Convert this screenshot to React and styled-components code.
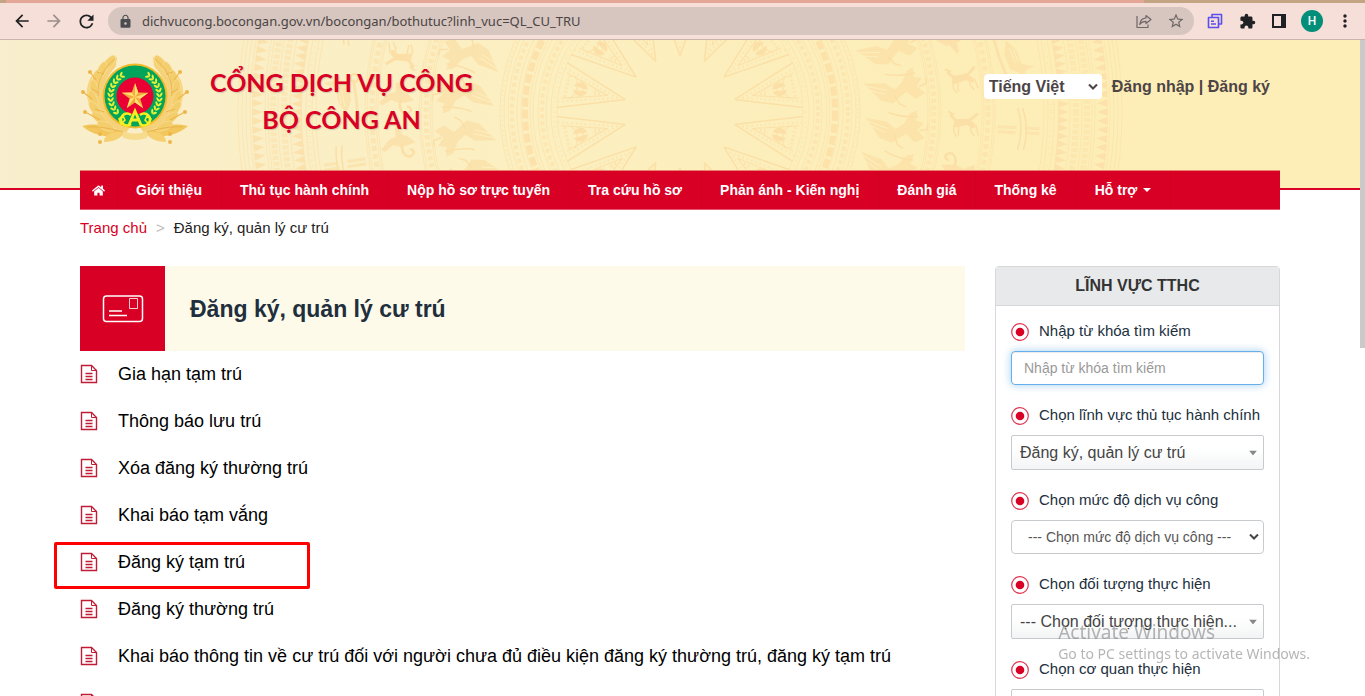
import React from "react";
import styled, { createGlobalStyle } from "styled-components";
import { FaHome } from "react-icons/fa";
import { MdArrowBack, MdArrowForward, MdRefresh, MdLock, MdExtension, MdStarBorder, MdMoreVert } from "react-icons/md";

const RED = "#d80024";
const SANS = '"Liberation Sans", Arial, sans-serif';
const UI = '"Noto Sans", "Open Sans", sans-serif';

const GlobalStyle = createGlobalStyle`
  *, *::before, *::after { box-sizing: border-box; }
  body { margin: 0; background: #fff; color: #212f3d; font-family: ${SANS}; font-size: 16px; }
  a { color: inherit; text-decoration: none; }
  ul, ol { list-style: none; margin: 0; padding: 0; }
  button { border: 0; background: none; padding: 0; cursor: pointer; }
`;

const Screen = styled.div`
  display: flex;
  flex-direction: column;
  height: 100vh;
  overflow: hidden;
`;

/* Browser bar */
const TabStrip = styled.div`
  flex: none;
  height: 3px;
  background: linear-gradient(90deg, #c3a583 0 6px, #e3a697 6px 1144px, #c3a583 1144px);
`;

const BrowserBar = styled.header`
  flex: none;
  display: flex;
  align-items: center;
  height: 37px;
  padding: 0 10px 0 12px;
  background: #f5dfd8;
  border-bottom: 1px solid #c9b3ad;
`;

const NavButtons = styled.div`
  display: flex;
  gap: 12px;
`;

const IconButton = styled.button`
  display: grid;
  place-items: center;
  width: 20px;
  height: 20px;
  color: ${(p) => p.$color || "#202124"};
`;

const AddressBar = styled.form`
  flex: 1;
  display: flex;
  align-items: center;
  gap: 12px;
  height: 28px;
  margin: 0 11px 0 12px;
  padding: 0 8px 0 10px;
  border-radius: 14px;
  background: #d7c6c0;
  color: #4b4d50;
`;

const UrlInput = styled.input`
  flex: 1;
  min-width: 0;
  margin-left: -3px;
  padding: 0;
  border: 0;
  outline: 0;
  background: none;
  color: #4a4443;
  font: 13px/20px ${UI};
`;

const Tools = styled.div`
  display: flex;
  align-items: center;
  gap: 12px;
`;

const Avatar = styled.button`
  width: 22px;
  height: 22px;
  border-radius: 50%;
  background: #018f79;
  color: #fff;
  font: 500 12px/22px Roboto, sans-serif;
`;

/* Page shell */
const Viewport = styled.div`
  flex: 1;
  min-height: 0;
  display: flex;
`;

const Page = styled.div`
  flex: 1;
  min-width: 0;
  overflow: hidden;
`;

const ScrollTrack = styled.div`
  flex: none;
  width: 5px;
  background: #fff;
`;

const ScrollThumb = styled.div`
  height: 47%;
  background: #cacaca;
`;

const Container = styled.div`
  max-width: 1200px;
  margin: 0 auto;
`;

/* Site header */
const SiteHeader = styled.header`
  position: relative;
  height: 150px;
  overflow: hidden;
  border-bottom: 2px solid ${RED};
  background: linear-gradient(90deg, #f9eecd, #fcefc0 40%, #fdeeb8 70%);
`;

const Drum = styled.svg`
  position: absolute;
  top: 0;
  left: 50%;
  transform: translateX(-50%);
`;

const HeaderRow = styled(Container)`
  position: relative;
  display: flex;
  align-items: flex-start;
  padding: 14px 10px 0 0;
`;

const Brand = styled.a`
  display: flex;
  gap: 20px;
`;

const BrandTitle = styled.h1`
  margin: 10px 0 0;
  color: ${RED};
  font: bold 25px/37px Lato, sans-serif;
  text-align: center;
  text-shadow: 1px 1px 1px rgba(0, 0, 0, 0.15);
`;

const Account = styled.div`
  display: flex;
  align-items: center;
  gap: 10px;
  margin-left: auto;
  padding-top: 20px;
  color: #4c4445;
  font: bold 16px/24px ${SANS};
`;

const SelectWrap = styled.span`
  position: relative;
  display: block;
  > svg {
    position: absolute;
    right: ${(p) => p.$inset || 6}px;
    top: 50%;
    transform: translateY(-50%);
    pointer-events: none;
  }
`;

const LanguageSelect = styled.select`
  appearance: none;
  display: block;
  width: 118px;
  height: 25px;
  padding: 0 20px 0 5px;
  border: 0;
  border-radius: 4px;
  background: #fff;
  color: #4c4445;
  font: bold 16px/24px ${SANS};
`;

/* Main menu */
const Menu = styled.nav`
  position: relative;
  max-width: 1200px;
  height: 40px;
  margin: -20px auto 0;
  background: ${RED};
  border-top: 1px solid #e9836f;
  border-bottom: 1px solid #e8536c;
`;

const MenuList = styled.ul`
  display: flex;
  height: 100%;
`;

const MenuItem = styled.li`
  border-right: 1px solid #d0001f;
  a {
    display: flex;
    align-items: center;
    gap: 6px;
    height: 100%;
    padding: ${(p) => (p.$home ? "0 12px" : "0 19px 0 18px")};
    color: #fff;
    font: bold 14px/38px ${SANS};
  }
`;

const Caret = styled.span`
  border: 4px solid transparent;
  border-top-color: #fff;
  border-bottom: 0;
`;

const Breadcrumb = styled.ol`
  display: flex;
  gap: 9px;
  padding: 8px 0;
  font-size: 15px;
  line-height: 20px;
  color: #222;
  a { color: ${RED}; }
  span { margin-right: 9px; color: #bbb; }
`;

/* Content */
const Content = styled.main`
  display: flex;
  align-items: flex-start;
  gap: 30px;
  padding-top: 20px;
`;

const Procedures = styled.section`
  flex: 1;
  min-width: 0;
`;

const SectionTitle = styled.div`
  display: flex;
  align-items: center;
  gap: 25px;
  background: #fdfaea;
  h2 {
    margin: 0;
    color: #212f3d;
    font: bold 23px/32px ${SANS};
  }
`;

const SectionIcon = styled.span`
  display: grid;
  place-items: center;
  width: 85px;
  height: 85px;
  background: ${RED};
`;

const ProcedureItem = styled.li`
  position: relative;
  a {
    display: flex;
    align-items: center;
    gap: 20px;
    height: 47px;
    padding-bottom: 2px;
    color: #000;
    font-size: 18px;
    line-height: 24px;
  }
`;

const Highlight = styled.span`
  position: absolute;
  left: -26px;
  top: 3px;
  width: 256px;
  height: 47px;
  border: 3px solid #fe0000;
  border-radius: 2px;
  pointer-events: none;
`;

/* Filter panel */
const Panel = styled.aside`
  width: 285px;
  border: 1px solid #d5d7d9;
  border-radius: 4px 4px 0 0;
  h3 {
    margin: 0;
    border-bottom: 1px solid #d5d7d9;
    background: #e8e9eb;
    color: #333;
    font: bold 16px/38px ${SANS};
    text-align: center;
  }
`;

const Filters = styled.form`
  display: grid;
  gap: 20px;
  padding: 15px;
`;

const Field = styled.div`
  label {
    display: flex;
    align-items: flex-end;
    gap: 10px;
    margin-bottom: 10px;
    color: #212f3d;
    font-size: 15px;
    line-height: 20px;
  }
`;

const SearchInput = styled.input`
  display: block;
  width: 100%;
  height: 34px;
  padding: 0 12px;
  border: 1px solid #66afe9;
  border-radius: 4px;
  outline: 0;
  box-shadow: inset 0 1px 1px rgba(0, 0, 0, 0.08), 0 0 8px rgba(102, 175, 233, 0.6);
  font: 14px/20px ${SANS};
  &::placeholder { color: #999; opacity: 1; }
`;

const FilterSelect = styled.select`
  appearance: none;
  display: block;
  width: 100%;
  height: ${(p) => (p.$plain ? 34 : 35)}px;
  padding: 0 ${(p) => (p.$plain ? "20px 0 16px" : "20px 0 8px")};
  border: 1px solid #c8cbce;
  border-radius: ${(p) => (p.$plain ? 4 : 2)}px;
  background: ${(p) => (p.$plain ? "#fff" : "linear-gradient(#fff 40%, #f3f4f5)")};
  color: ${(p) => (p.$plain ? "#555" : "#444")};
  font: ${(p) => (p.$plain ? 14 : 16)}px/20px ${SANS};
`;

const Watermark = styled.div`
  position: fixed;
  right: 55px;
  bottom: 32px;
  color: rgba(120, 120, 120, 0.55);
  font-family: ${UI};
  pointer-events: none;
  p { margin: 0; font-size: 14px; line-height: 20px; }
  p:first-child { font-size: 19px; line-height: 24px; }
`;

const ShareIcon = () => (
  <svg width="16" height="16" viewBox="0 0 16 16" fill="none" stroke="#6f6765" strokeWidth="1.2" strokeLinejoin="round">
    <path d="M1 3v11.500h11v-3" />
    <path d="M10 2.500l5 4-5 4V8.300C7 8.300 5.300 9 3.700 11.500c.5-4 2.600-6.300 6.300-6.600z" />
  </svg>
);

const CopyIcon = () => (
  <svg width="16" height="16" viewBox="0 0 16 16" fill="none" stroke="#5b4ff0" strokeWidth="1.600" strokeLinejoin="round">
    <path d="M5 4V1.500h9.500v9.500H12" />
    <path d="M1.500 4.500H11.500v10h-10zM4 8.200h3M4 11h5" />
  </svg>
);

const SidePanelIcon = () => (
  <svg width="14" height="14" viewBox="0 0 14 14">
    <path d="M0 0h14v14H0zM2 2v10h7V2z" fill="#202124" fillRule="evenodd" />
  </svg>
);

const Chevron = ({ color }) => (
  <svg width="10" height="7" viewBox="0 0 10 7" fill="none" stroke={color} strokeWidth="2">
    <path d="M1 1l4 4 4-4" />
  </svg>
);

const Triangle = () => (
  <svg width="8" height="5" viewBox="0 0 8 5">
    <path d="M0 0h8L4 5z" fill="#888" />
  </svg>
);

const CardIcon = () => (
  <svg width="42" height="28" viewBox="0 0 42 28" fill="none" stroke="#fff">
    <rect x="1.500" y="1" width="39" height="25.500" rx="3" strokeWidth="1.500" />
    <path d="M27.500 3.500h8v10h-8z" opacity=".8" />
    <path d="M7 16h13M7 20.500h18" strokeWidth="1.500" />
  </svg>
);

const DocIcon = () => (
  <svg width="18" height="20" viewBox="0 0 18 20" fill="none" stroke="#c01c36">
    <path d="M1.500 1.500h10l5 5v12h-15z" strokeWidth="1.400" />
    <path d="M11.500 1.500v5h5" />
    <path d="M5.500 9.500h7M5.500 12.500h7M5.500 15.500h7" strokeWidth="1.300" />
  </svg>
);

const Bullet = () => (
  <svg width="18" height="18" viewBox="0 0 18 18">
    <circle cx="9" cy="9" r="8.300" fill="#fff" stroke="#df3550" strokeWidth="1.200" />
    <circle cx="9" cy="9" r="4.300" fill={RED} />
  </svg>
);

const starPoints = (cx, cy, outer, inner) =>
  Array.from({ length: 10 }, (_, i) => {
    const a = (i * Math.PI) / 5 - Math.PI / 2;
    const r = i % 2 ? inner : outer;
    return `${cx + r * Math.cos(a)},${cy + r * Math.sin(a)}`;
  }).join(" ");

const WreathHalf = () => (
  <g>
    <path d="M37 3C24 5 16 15 16 25C10 32 12 48 19 60C25 69 35 76 46 79L50 73C34 70 22 56 23 40C23 27 31 18 36 12Z" fill="#f5d27a" />
    <path d="M2 72C12 69 25 70 44 79C30 85 13 82 2 72Z" fill="#f2c65a" />
    <path d="M24 88C24 80 32 77 46 78C41 84 34 88 24 88Z" fill="#f5cf70" />
    <path d="M16 17C7 30 6 52 24 67C16 64 5 50 7 35C8 27 11 22 16 17Z" fill="#f7d682" />
    {[0, 1, 2, 3, 4, 5, 6, 7].map((i) => {
      const a = ((128 + i * 14) * Math.PI) / 180;
      const x = 55 + 42 * Math.cos(a);
      const y = 42 - 42 * Math.sin(a);
      return (
        <ellipse key={i} cx={x} cy={y} rx="4" ry="9" fill="#f4cd6c" stroke="#f9e09a" strokeWidth=".6" transform={`rotate(${38 - i * 15} ${x} ${y})`} />
      );
    })}
    <path d="M35 5C24 13 17 27 18 42M17 18l7 2M12 35l7 4M15 55l9 3M7 73c13-1 25 2 37 5" fill="none" stroke="#e5b045" strokeWidth=".8" />
    {[[10, 18], [3, 38], [5, 58], [20, 80], [20, 88]].map(([x, y]) => (
      <circle key={`${x}-${y}`} cx={x} cy={y} r="2" fill="#edb648" />
    ))}
    <path d="M3 38l9 7M5 58l15 8M10 18l6 8" stroke="#edb648" strokeWidth="1.200" />
  </g>
);

const GrainHalf = () => (
  <g fill="#e6ee3a">
    {Array.from({ length: 10 }, (_, i) => {
      const a = ((120 + i * 11) * Math.PI) / 180;
      const x = 55 + 24.500 * Math.cos(a);
      const y = 42 - 24.500 * Math.sin(a);
      return (
        <g key={i} transform={`translate(${x} ${y}) rotate(${-(120 + i * 11) + 180})`}>
          <ellipse cx="-1.800" rx="1.100" ry="2.500" transform="rotate(-35)" />
          <ellipse cx="1.800" rx="1.100" ry="2.500" transform="rotate(35)" />
        </g>
      );
    })}
  </g>
);

const Emblem = () => (
  <svg width="110" height="92" viewBox="0 0 110 92" role="img" aria-label="Bộ Công an">
    <WreathHalf />
    <g transform="translate(110 0) scale(-1 1)"><WreathHalf /></g>
    <path d="M43 77Q55 82 67 77V84Q55 88 43 84Z" fill="#f7dc90" />
    <circle cx="55" cy="42" r="32.500" fill="#f3ba2c" />
    <circle cx="55" cy="42" r="30.500" fill="#00a45a" />
    <GrainHalf />
    <g transform="translate(110 0) scale(-1 1)"><GrainHalf /></g>
    <circle cx="55" cy="42" r="18.500" fill="#ea0033" />
    <polygon points={starPoints(55, 43, 14, 5.5)} fill="#f3aa3c" />
    {[0, 1, 2, 3, 4].map((i) => (
      <path key={i} d="M55 43V29L58.200 38.500Z" fill="#ffdf70" transform={`rotate(${i * 72} 55 43)`} />
    ))}
    <g fill="none" stroke="#f6ef22">
      <path d="M49 71L55 57L61 71M50 66h10" strokeWidth="2.800" />
      <path d="M51 61a6 6 0 1 0 0 9" strokeWidth="2.400" />
      <path d="M60 61a6 6 0 1 1 0 9" strokeWidth="2.400" />
      <path d="M39 65l4-3 2 4-4 4zM71 65l-4-3-2 4 4 4z" strokeWidth="1.600" />
    </g>
  </svg>
);

const CX = 680;
const CY = 72;

const around = (count, offset, draw) =>
  Array.from({ length: count }, (_, i) => (
    <g key={i} transform={`translate(${CX} ${CY}) rotate(${(i * 360) / count + offset})`}>
      {draw(i)}
    </g>
  ));

const Ring = ({ r, width = 1, dash, opacity = 0.6 }) => (
  <circle cx={CX} cy={CY} r={r} fill="none" strokeWidth={width} strokeDasharray={dash} opacity={opacity} />
);

/* Bronze drum ornament: a fourteen-ray star, then rings of dancers, deer and birds */
const DrumPattern = () => (
  <Drum width="1360" height="150" viewBox="0 0 1360 150" stroke="#fbdfa6" fill="#fbdfa6" aria-hidden="true">
    {around(14, 360 / 28, () => (
      <g>
        <path d="M56 0L121 -23M56 0L121 23" fill="none" strokeWidth="1.500" />
        <path d="M64 0L121 -17M64 0L121 17" fill="none" strokeWidth="2" strokeDasharray="1.500 3" opacity=".7" />
        <path d="M74 0L119 -13M74 0L119 13" fill="none" />
        <path d="M104 -9a11 11 0 0 0 0 18M111 -12a16 16 0 0 0 0 24" fill="none" strokeWidth="1.500" opacity=".7" />
        <path d="M95 -1C96 -8 106 -9 109 -2ZM95 1C96 8 106 9 109 2Z" stroke="none" />
        <path d="M82 0l8 -2M82 0l8 2M116 -11v22" fill="none" strokeWidth="3" strokeDasharray="2 2" opacity=".6" />
      </g>
    ))}
    {[123, 129, 134, 142, 147, 150, 159, 163, 172, 176, 180].map((r) => <Ring key={r} r={r} />)}
    <Ring r={126} width={2} dash="1 4" />
    <Ring r={138} width={4} dash="4 3" />
    <Ring r={155} width={6} dash="9 3" opacity={0.85} />
    <Ring r={168} width={4} dash="4 3" />
    <Ring r={178} width={2} dash="1 4" />
    {around(34, 4, () => (
      <g>
        <path d="M186 -7l21 2 9 7 8 -6 6 -11 7 -3 -1 10 8 2 -6 8 8 7 -10 5 -9 -8 -6 4 -8 6 -12 -4z" stroke="none" opacity=".75" />
        <path d="M188 -4l20 6M190 0l16 6" fill="none" stroke="#fdefbe" />
        <path d="M208 -14q10 4 30 2M215 8l4 9 6 4M240 2l8 -2v-6" fill="none" strokeWidth="1.500" />
      </g>
    ))}
    {[248, 250, 259, 261].map((r) => <Ring key={r} r={r} />)}
    <Ring r={254} width={5} dash="4 3" />
    {around(40, 2, (i) =>
      i % 3 ? (
        <g>
          <path d="M266 2l14 -3 9 3 9 -6 3 3 -9 9 -7 2 0 9 -3 1 -4 -9 -5 -2z" stroke="none" opacity=".8" />
          <path d="M279 3q3 -7 -1 -12q-5 -5 -9 1q0 4 4 4" fill="none" strokeWidth="2.500" />
        </g>
      ) : (
        <g fill="none">
          <path d="M270 -7l6 6 14 -1 8 -7" strokeWidth="3" />
          <path d="M274 0l12 -2 8 2 2 6 -4 0 -4 -3 -9 2 -5 1z" stroke="none" fill="#fbdfa6" />
          <path d="M275 2l-1 7 3 6M279 2v12M292 1l-1 7 4 6M296 2l3 11" strokeWidth="1.500" />
          <path d="M268 -10l6 3" strokeWidth="2" />
        </g>
      )
    )}
    {[302, 304, 313, 315].map((r) => <Ring key={r} r={r} />)}
    <Ring r={308} width={5} dash="5 3" />
    {around(30, 3, (i) =>
      i % 2 ? (
        <g>
          <path d="M333 -20l9 12 3 14 12 4 -9 3 -3 9 -5 -9 -7 -3 -4 -15z" stroke="none" opacity=".75" />
          <path d="M321 -25l3 22 4 18" fill="none" strokeWidth="3" opacity=".8" />
          <path d="M335 -12l4 16M339 -10l3 14" fill="none" stroke="#fdefbe" />
          <circle cx="327" cy="17" r="4" fill="none" strokeWidth="2" />
        </g>
      ) : (
        <g fill="none">
          <path d="M318 -2h19M345 -2h15M318 3h18M346 3h14" strokeWidth="3" opacity=".7" />
          <path d="M337 -22q8 20 2 42M342 -22q8 20 3 42" strokeWidth="1.500" />
        </g>
      )
    )}
    {[364, 368, 374, 390, 402, 412, 415, 430, 434, 438, 442].map((r) => <Ring key={r} r={r} />)}
    <Ring r={371} width={2} dash="1 5" />
    <Ring r={396} width={6} dash="4 2" opacity={0.5} />
    <Ring r={407} width={6} dash="4 2" opacity={0.5} />
    {around(300, 0, () => <path d="M378 -4L389 0L378 4ZM417 0L428 -4V4Z" stroke="none" opacity=".8" />)}
  </Drum>
);

const MENU = ["Giới thiệu", "Thủ tục hành chính", "Nộp hồ sơ trực tuyến", "Tra cứu hồ sơ", "Phản ánh - Kiến nghị", "Đánh giá", "Thống kê"];

const PROCEDURES = [
  "Gia hạn tạm trú",
  "Thông báo lưu trú",
  "Xóa đăng ký thường trú",
  "Khai báo tạm vắng",
  "Đăng ký tạm trú",
  "Đăng ký thường trú",
  "Khai báo thông tin về cư trú đối với người chưa đủ điều kiện đăng ký thường trú, đăng ký tạm trú",
  "",
];

const SELECTS = [
  { id: "field", label: "Chọn lĩnh vực thủ tục hành chính", value: "Đăng ký, quản lý cư trú" },
  { id: "level", label: "Chọn mức độ dịch vụ công", value: "--- Chọn mức độ dịch vụ công ---", plain: true },
  { id: "subject", label: "Chọn đối tượng thực hiện", value: "--- Chọn đối tượng thực hiện..." },
  { id: "agency", label: "Chọn cơ quan thực hiện", value: "--- Chọn cơ quan thực hiện ---" },
];

export default function App() {
  return (
    <Screen>
      <GlobalStyle />
      <TabStrip />
      <BrowserBar>
        <NavButtons>
          <IconButton aria-label="Back"><MdArrowBack size={20} /></IconButton>
          <IconButton aria-label="Forward" $color="#9b8f8c"><MdArrowForward size={20} /></IconButton>
          <IconButton aria-label="Reload"><MdRefresh size={21} /></IconButton>
        </NavButtons>
        <AddressBar>
          <MdLock size={15} />
          <UrlInput aria-label="Address" defaultValue="dichvucong.bocongan.gov.vn/bocongan/bothutuc?linh_vuc=QL_CU_TRU" />
          <IconButton type="button" aria-label="Share"><ShareIcon /></IconButton>
          <IconButton type="button" aria-label="Bookmark" $color="#6f6765"><MdStarBorder size={18} /></IconButton>
        </AddressBar>
        <Tools>
          <IconButton aria-label="Copy"><CopyIcon /></IconButton>
          <IconButton aria-label="Extensions"><MdExtension size={17} /></IconButton>
          <IconButton aria-label="Side panel"><SidePanelIcon /></IconButton>
          <Avatar>H</Avatar>
          <IconButton aria-label="More"><MdMoreVert size={20} /></IconButton>
        </Tools>
      </BrowserBar>

      <Viewport>
        <Page>
          <SiteHeader>
            <DrumPattern />
            <HeaderRow>
              <Brand href="#">
                <Emblem />
                <BrandTitle>CỔNG DỊCH VỤ CÔNG<br />BỘ CÔNG AN</BrandTitle>
              </Brand>
              <Account>
                <SelectWrap $inset={4}>
                  <LanguageSelect aria-label="Ngôn ngữ"><option>Tiếng Việt</option></LanguageSelect>
                  <Chevron color="#4c4445" />
                </SelectWrap>
                <span><a href="#">Đăng nhập</a> | <a href="#">Đăng ký</a></span>
              </Account>
            </HeaderRow>
          </SiteHeader>

          <Menu>
            <MenuList>
              <MenuItem $home><a href="#" aria-label="Trang chủ"><FaHome size={13} /></a></MenuItem>
              {MENU.map((m) => <MenuItem key={m}><a href="#">{m}</a></MenuItem>)}
              <MenuItem><a href="#">Hỗ trợ<Caret /></a></MenuItem>
            </MenuList>
          </Menu>

          <Container>
            <Breadcrumb>
              <li><a href="#">Trang chủ</a></li>
              <li><span>&gt;</span>Đăng ký, quản lý cư trú</li>
            </Breadcrumb>
            <Content>
              <Procedures>
                <SectionTitle>
                  <SectionIcon><CardIcon /></SectionIcon>
                  <h2>Đăng ký, quản lý cư trú</h2>
                </SectionTitle>
                <ul>
                  {PROCEDURES.map((p) => (
                    <ProcedureItem key={p}>
                      <a href="#"><DocIcon />{p}</a>
                      {p === "Đăng ký tạm trú" && <Highlight />}
                    </ProcedureItem>
                  ))}
                </ul>
              </Procedures>

              <Panel>
                <h3>LĨNH VỰC TTHC</h3>
                <Filters>
                  <Field>
                    <label htmlFor="keyword"><Bullet />Nhập từ khóa tìm kiếm</label>
                    <SearchInput id="keyword" placeholder="Nhập từ khóa tìm kiếm" />
                  </Field>
                  {SELECTS.map((s) => (
                    <Field key={s.id}>
                      <label htmlFor={s.id}><Bullet />{s.label}</label>
                      <SelectWrap $inset={s.plain ? 5 : 7}>
                        <FilterSelect id={s.id} $plain={s.plain}><option>{s.value}</option></FilterSelect>
                        {s.plain ? <Chevron color="#444" /> : <Triangle />}
                      </SelectWrap>
                    </Field>
                  ))}
                </Filters>
              </Panel>
            </Content>
          </Container>
        </Page>
        <ScrollTrack><ScrollThumb /></ScrollTrack>
      </Viewport>

      <Watermark>
        <p>Activate Windows</p>
        <p>Go to PC settings to activate Windows.</p>
      </Watermark>
    </Screen>
  );
}
